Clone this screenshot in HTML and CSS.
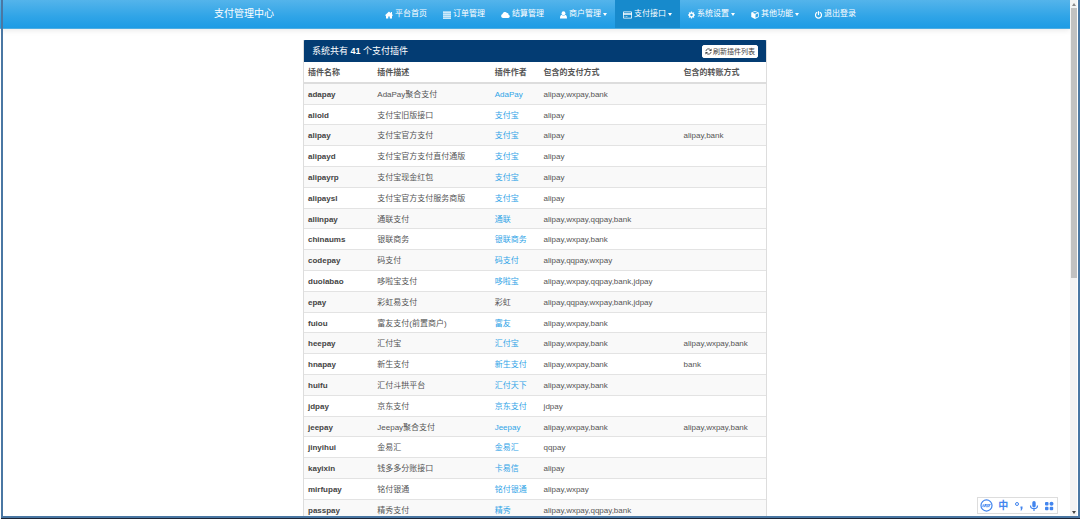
FILE: index.html
```html
<!DOCTYPE html>
<html lang="zh-CN">
<head>
<meta charset="utf-8">
<title>支付管理中心</title>
<link rel="stylesheet" href="styles.css">
</head>
<body>
<div class="window">
  <div class="page">
    <header class="navbar">
      <div class="navbar-inner">
        <a class="brand" href="#">支付管理中心</a>
        <nav>
          <ul class="menu">
            <li><a href="#"><svg class="icon" viewBox="0 0 16 16"><path d="M8 1 0 8.400l1.200 1.200L2 9v6h4.500v-4h3v4H14V9l.8.600L16 8.400l-2-1.900V2h-2.400v2.300z"/></svg>平台首页</a></li>
            <li><a href="#"><svg class="icon" viewBox="0 0 16 16"><path d="M0 1h16v2.500H0zM0 5h16v2.500H0zM0 9h16v2.500H0zM0 13h16v2.500H0z"/></svg>订单管理</a></li>
            <li><a href="#"><svg class="icon icon-wide" viewBox="0 0 18 16"><path d="M4 14a4 4 0 0 1-1-7.800A5 5 0 0 1 12 4a3 3 0 0 1 3 3.500A3.300 3.300 0 0 1 14.500 14z"/></svg>结算管理</a></li>
            <li><a href="#"><svg class="icon icon-narrow" viewBox="0 0 14 16"><circle cx="7" cy="4.500" r="3.800"/><path d="M3.500 7.500C1 8 0 10.500 0 15h14c0-4.500-1-7-3.500-7.500a5 5 0 0 1-7 0z"/></svg>商户管理<i class="caret"></i></a></li>
            <li><a class="active" href="#"><svg class="icon icon-wide" viewBox="0 0 18 16"><path fill-rule="evenodd" d="M1.500 1h15Q18 1 18 2.500v11q0 1.500-1.500 1.500h-15Q0 15 0 13.500v-11Q0 1 1.500 1zm0 1.500v2h15v-2zm0 5v6h15v-6zM3 11h2v1.200H3zm3 0h3v1.200H6z"/></svg>支付接口<i class="caret"></i></a></li>
            <li><a href="#"><svg class="icon icon-narrow" viewBox="0 0 16 16"><path fill-rule="evenodd" d="M6.700 0h2.600l.4 2.200 1.300.6L13 1.500 14.500 3l-1.300 2 .6 1.300 2.200.4v2.600l-2.200.4-.6 1.300 1.300 2-1.500 1.500-2-1.300-1.300.6-.4 2.200H6.700l-.4-2.200-1.300-.6-2 1.300L1.500 13l1.300-2-.6-1.300L0 9.300V6.700l2.200-.4L2.800 5 1.500 3 3 1.500l2 1.300 1.300-.6zM8 5.200a2.800 2.800 0 1 0 0 5.600 2.800 2.800 0 0 0 0-5.600z"/></svg>系统设置<i class="caret"></i></a></li>
            <li><a href="#"><svg class="icon" viewBox="0 0 16 16"><path fill-rule="evenodd" d="M8 0l7.500 3v9L8 16 .5 12V3zm0 1.700L3 3.700l5 2 5-2zm1 5.500v6.500l5-2.700V5.200z"/></svg>其他功能<i class="caret"></i></a></li>
            <li><a href="#"><svg class="icon icon-narrow" viewBox="1 0 14 16"><path fill="none" stroke="currentColor" stroke-width="2.400" stroke-linecap="round" d="M4.500 3.200a6 6 0 1 0 7 0M8 1.200v6"/></svg>退出登录</a></li>
          </ul>
        </nav>
      </div>
    </header>
    <main class="panel">
      <div class="panel-heading">
        <h1>系统共有 <b>41</b> 个支付插件</h1>
        <button class="refresh" type="button"><svg class="icon-refresh" viewBox="0 0 16 16"><path fill="none" stroke="currentColor" stroke-width="2" d="M2 7a6 6 0 0 1 10.500-3M14 9a6 6 0 0 1-10.500 3"/><path d="M15 1v6H9zM1 15V9h6z"/></svg>刷新插件列表</button>
      </div>
      <table class="plugins">
        <colgroup><col class="c-name"><col class="c-desc"><col class="c-author"><col class="c-pay"><col class="c-transfer"></colgroup>
        <thead><tr><th>插件名称</th><th>插件描述</th><th>插件作者</th><th>包含的支付方式</th><th>包含的转账方式</th></tr></thead>
        <tbody>
          <tr><td><b>adapay</b></td><td>AdaPay聚合支付</td><td><a href="#">AdaPay</a></td><td>alipay,wxpay,bank</td><td></td></tr>
          <tr><td><b>aliold</b></td><td>支付宝旧版接口</td><td><a href="#">支付宝</a></td><td>alipay</td><td></td></tr>
          <tr><td><b>alipay</b></td><td>支付宝官方支付</td><td><a href="#">支付宝</a></td><td>alipay</td><td>alipay,bank</td></tr>
          <tr><td><b>alipayd</b></td><td>支付宝官方支付直付通版</td><td><a href="#">支付宝</a></td><td>alipay</td><td></td></tr>
          <tr><td><b>alipayrp</b></td><td>支付宝现金红包</td><td><a href="#">支付宝</a></td><td>alipay</td><td></td></tr>
          <tr><td><b>alipaysl</b></td><td>支付宝官方支付服务商版</td><td><a href="#">支付宝</a></td><td>alipay</td><td></td></tr>
          <tr><td><b>allinpay</b></td><td>通联支付</td><td><a href="#">通联</a></td><td>alipay,wxpay,qqpay,bank</td><td></td></tr>
          <tr><td><b>chinaums</b></td><td>银联商务</td><td><a href="#">银联商务</a></td><td>alipay,wxpay,bank</td><td></td></tr>
          <tr><td><b>codepay</b></td><td>码支付</td><td><a href="#">码支付</a></td><td>alipay,qqpay,wxpay</td><td></td></tr>
          <tr><td><b>duolabao</b></td><td>哆啦宝支付</td><td><a href="#">哆啦宝</a></td><td>alipay,wxpay,qqpay,bank,jdpay</td><td></td></tr>
          <tr><td><b>epay</b></td><td>彩虹易支付</td><td>彩虹</td><td>alipay,qqpay,wxpay,bank,jdpay</td><td></td></tr>
          <tr><td><b>fuiou</b></td><td>富友支付(前置商户)</td><td><a href="#">富友</a></td><td>alipay,wxpay,bank</td><td></td></tr>
          <tr><td><b>heepay</b></td><td>汇付宝</td><td><a href="#">汇付宝</a></td><td>alipay,wxpay,bank</td><td>alipay,wxpay,bank</td></tr>
          <tr><td><b>hnapay</b></td><td>新生支付</td><td><a href="#">新生支付</a></td><td>alipay,wxpay,bank</td><td>bank</td></tr>
          <tr><td><b>huifu</b></td><td>汇付斗拱平台</td><td><a href="#">汇付天下</a></td><td>alipay,wxpay,bank</td><td></td></tr>
          <tr><td><b>jdpay</b></td><td>京东支付</td><td><a href="#">京东支付</a></td><td>jdpay</td><td></td></tr>
          <tr><td><b>jeepay</b></td><td>Jeepay聚合支付</td><td><a href="#">Jeepay</a></td><td>alipay,wxpay,bank</td><td>alipay,wxpay,bank</td></tr>
          <tr><td><b>jinyihui</b></td><td>金易汇</td><td><a href="#">金易汇</a></td><td>qqpay</td><td></td></tr>
          <tr><td><b>kayixin</b></td><td>钱多多分账接口</td><td><a href="#">卡易信</a></td><td>alipay</td><td></td></tr>
          <tr><td><b>mirfupay</b></td><td>铭付银通</td><td><a href="#">铭付银通</a></td><td>alipay,wxpay</td><td></td></tr>
          <tr><td><b>passpay</b></td><td>精秀支付</td><td><a href="#">精秀</a></td><td>alipay,wxpay,qqpay,bank</td><td></td></tr>
        </tbody>
      </table>
    </main>
  </div>
  <div class="scrollbar" aria-hidden="true">
    <span class="arrow arrow-up"></span>
    <span class="track"><span class="thumb"></span></span>
    <span class="arrow arrow-down"></span>
  </div>
</div>
<div class="ime">
  <svg viewBox="0 0 16 16" class="ime-logo"><circle cx="8" cy="8" r="6.800" fill="none" stroke="currentColor" stroke-width="1.500"/><path fill="none" stroke="currentColor" stroke-width="1.300" d="M4.200 6.500 3.500 10M5.700 10l.7-3.300h1.500M6 8.400h1.500M9 6.300 8.500 9.500h1M10.500 6.300l.7 1.700 1.600-1.700M11.200 8l-.5 2"/></svg>
  <span class="ime-lang">中</span>
  <svg viewBox="0 0 10 10"><circle cx="3" cy="3" r="1.500" fill="none" stroke="currentColor"/><path d="M6.500 5.500h2v2l-1 2H6.500l.6-2h-.6z"/></svg>
  <svg viewBox="0 0 10 10"><rect x="3.300" y="0" width="3.400" height="6.500" rx="1.700"/><path fill="none" stroke="currentColor" stroke-width="1.200" d="M1.500 4.500a3.500 3.200 0 0 0 7 0M5 7.500V10"/></svg>
  <svg viewBox="0 0 10 10"><rect x="1" y="1" width="3.500" height="3.500" rx="1"/><circle cx="7.500" cy="2.700" r="2"/><rect x="1" y="5.700" width="3.500" height="3.500" rx="1"/><rect x="5.700" y="5.700" width="3.500" height="3.500" rx="1"/></svg>
</div>
</body>
</html>
```
FILE: styles.css
```css
* { box-sizing: border-box; }

body {
  margin: 0;
  background: #fff;
  color: #555;
  font: 8px/1.35 "Liberation Sans", "Noto Sans CJK SC", sans-serif;
}

a { color: #2fa4e7; text-decoration: none; }
svg { fill: currentColor; flex: none; }

.window {
  position: relative;
  display: flex;
  height: 100vh;
  overflow: hidden;
  padding: 0 3px 3px 0;
}

/* Window frame drawn above the page */
.window::after {
  content: "";
  position: absolute;
  inset: 0 0 1px 1px;
  border: solid #4a77a3;
  border-width: 0 2px 2px 2px;
  box-shadow: 0 1px #1a2436;
  pointer-events: none;
}

.page { flex: 1; min-width: 0; }

.navbar {
  height: 29px;
  border-bottom: 1px solid #4bade3;
  background: linear-gradient(#54b4eb, #2fa4e7 60%, #1d9ce5);
  box-shadow: 0 1px 6px rgba(0, 0, 0, .1);
}

.navbar-inner {
  display: flex;
  justify-content: space-between;
  align-items: stretch;
  height: 100%;
  max-width: 660px;
  margin: 0 auto;
}

.navbar a { color: #fff; }

.brand {
  display: flex;
  align-items: center;
  padding-left: 9px;
  font-size: 10px;
}

.menu {
  display: flex;
  height: 100%;
  margin: 0;
  padding: 0;
  list-style: none;
}

.menu a {
  display: flex;
  align-items: center;
  gap: 2px;
  height: 100%;
  padding: 1px 8px 0;
  white-space: nowrap;
}

.menu li:last-child { padding-right: 1px; }
.menu .active { background: #178acc; }

.icon { width: 8px; height: 8px; }
.icon-wide { width: 9px; }
.icon-narrow { width: 7px; }

.caret {
  border: solid transparent;
  border-width: 3px 2px 0;
  border-top-color: #fff;
}

.panel {
  max-width: 464px;
  margin: 11px auto 0;
  border: 1px solid #ddd;
  border-top-color: #033c73;
  border-radius: 2px 2px 0 0;
}

.panel-heading {
  display: flex;
  justify-content: space-between;
  align-items: center;
  height: 21px;
  padding: 0 8px;
  background: #033c73;
  color: #fff;
}

.panel-heading h1 {
  margin: 0;
  font-size: 9px;
  font-weight: 400;
}

.refresh {
  display: flex;
  align-items: center;
  gap: 1px;
  height: 13px;
  padding: 0 2px;
  border: 1px solid #fff;
  border-radius: 2px;
  background: #fff;
  color: #444;
  font: 7px/1 "Liberation Sans", "Noto Sans CJK SC", sans-serif;
}

.icon-refresh { width: 7px; height: 7px; }

.plugins {
  width: 100%;
  table-layout: fixed;
  border-spacing: 0;
}

.c-name { width: 15%; }
.c-desc { width: 25.4%; }
.c-author { width: 10.6%; }
.c-pay { width: 30.3%; }

.plugins th,
.plugins td {
  padding: 6px 4px 3px;
  text-align: left;
  vertical-align: middle;
  white-space: nowrap;
}

.plugins th { border-bottom: 2px solid #ddd; font-weight: 700; }
.plugins td { border-bottom: 1px solid #e3e3e3; }
.plugins b { color: #444; }
.plugins tbody tr:nth-child(odd) { background: #f9f9f9; }

.scrollbar {
  display: flex;
  flex-direction: column;
  width: 7px;
  background: #f3f3f3;
}

.arrow {
  height: 8px;
  display: grid;
  place-items: center;
}

.arrow::before {
  content: "";
  border: 2px solid transparent;
}

.arrow-up::before { border-top: 0; border-bottom: 3px solid #888; }
.arrow-down::before { border-bottom: 0; border-top: 3px solid #444; }

.track { flex: 1; padding-left: 1px; }
.thumb { display: block; height: 54%; background: #c1c1c1; }

.ime {
  position: fixed;
  right: 22px;
  bottom: 5px;
  display: flex;
  align-items: center;
  justify-content: space-between;
  width: 81px;
  height: 17px;
  padding: 0 3px 0 2px;
  border: 1px solid #ddd;
  background: #fff;
  color: #4285ee;
}

.ime svg { width: 10px; height: 10px; }
.ime .ime-logo { width: 13px; height: 13px; }
.ime-lang { font-size: 10px; font-weight: 700; line-height: 12px; }
```
